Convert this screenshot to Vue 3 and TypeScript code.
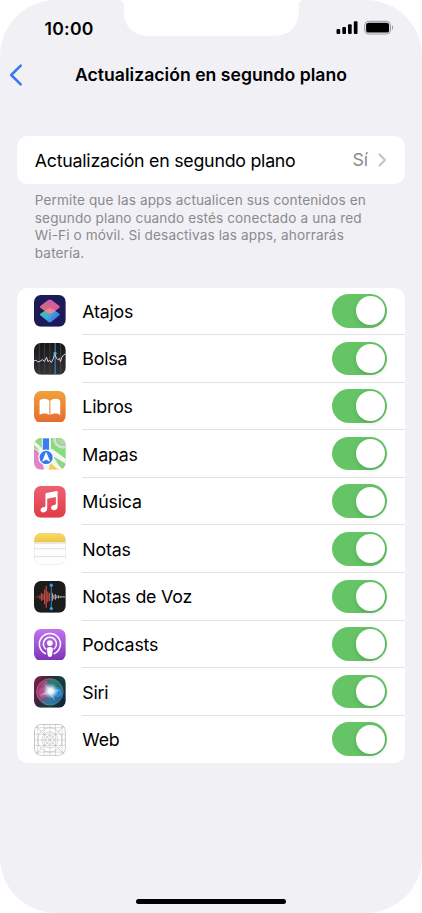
<script setup lang="ts">
import { ref } from 'vue'

interface AppRow {
  id: string
  name: string
  enabled: boolean
}

const apps = ref<AppRow[]>([
  { id: 'shortcuts', name: 'Atajos', enabled: true },
  { id: 'stocks', name: 'Bolsa', enabled: true },
  { id: 'books', name: 'Libros', enabled: true },
  { id: 'maps', name: 'Mapas', enabled: true },
  { id: 'music', name: 'Música', enabled: true },
  { id: 'notes', name: 'Notas', enabled: true },
  { id: 'voice', name: 'Notas de Voz', enabled: true },
  { id: 'podcasts', name: 'Podcasts', enabled: true },
  { id: 'siri', name: 'Siri', enabled: true },
  { id: 'web', name: 'Web', enabled: true },
])
</script>

<template>
  <div class="phone">
    <svg class="notch" width="188" height="36" viewBox="0 0 188 36">
      <path d="M0 0H188C184.500 0 181.700 1.500 181.700 6V11C181.700 26 172 35.800 157 35.800H31C16 35.800 6.800 26 6.800 11V6C6.800 1.500 4 0 0 0Z" fill="#fff" />
    </svg>

    <header class="status">
      <span class="time">10:00</span>
      <svg class="signals" width="60" height="16" viewBox="0 0 60 16">
        <rect x="0.500" y="9" width="3.700" height="5" rx="1" />
        <rect x="6.300" y="7" width="3.700" height="7" rx="1" />
        <rect x="12" y="4.200" width="3.700" height="9.800" rx="1" />
        <rect x="17.800" y="1.200" width="3.700" height="12.800" rx="1" />
        <rect x="28.700" y="1.300" width="25.800" height="12.700" rx="4" fill="none" stroke="#99989d" />
        <rect x="30.100" y="2.700" width="23" height="9.900" rx="2.600" />
        <path d="M56 5.500C57.500 6 57.500 9.300 56 9.800Z" fill="#99989d" />
      </svg>
    </header>

    <nav class="nav">
      <svg class="back" width="14" height="22" viewBox="0 0 14 22">
        <path d="M11.700 1.700 2.200 11l9.500 9.300" fill="none" stroke="#3478f6" stroke-width="2.500" stroke-linecap="round" stroke-linejoin="round" />
      </svg>
      <h1>Actualización en segundo plano</h1>
    </nav>

    <main>
      <section class="card general">
        <span class="general-label">Actualización en segundo plano</span>
        <span class="value">Sí</span>
        <svg width="9" height="14" viewBox="0 0 9 14">
          <path d="M1.500 1.400 7 7l-5.500 5.600" fill="none" stroke="#c1c1c4" stroke-width="2" stroke-linecap="round" stroke-linejoin="round" />
        </svg>
      </section>

      <p class="hint">
        Permite que las apps actualicen sus contenidos en<br />
        segundo plano cuando estés conectado a una red<br />
        Wi-Fi o móvil. Si desactivas las apps, ahorrarás<br />
        batería.
      </p>

      <ul class="card list">
        <li v-for="app in apps" :key="app.id" class="row">
          <svg class="icon" viewBox="0 0 32 32">
            <defs>
              <clipPath :id="`clip-${app.id}`"><rect width="32" height="32" rx="7" /></clipPath>
            </defs>
            <g :clip-path="`url(#clip-${app.id})`">
              <template v-if="app.id === 'shortcuts'">
                <defs>
                  <linearGradient id="sc-bottom" x1="0" y1="0" x2="1" y2="0.600">
                    <stop offset="0" stop-color="#4fc08c" />
                    <stop offset="0.500" stop-color="#42b2d8" />
                    <stop offset="1" stop-color="#3a6fe8" />
                  </linearGradient>
                  <linearGradient id="sc-top" x1="0.700" y1="0" x2="0.350" y2="1">
                    <stop offset="0" stop-color="#d75dc9" />
                    <stop offset="0.500" stop-color="#e56692" />
                    <stop offset="1" stop-color="#ed7869" />
                  </linearGradient>
                </defs>
                <rect width="32" height="32" fill="#1d1b57" />
                <path d="M7 18.300 14.500 13.500q1.500-1 3 0l7.500 4.800q2 1.300 0 2.700l-7.300 5.900q-1.700 1.200-3.400 0L7 21q-2-1.400 0-2.700Z" fill="url(#sc-bottom)" />
                <path d="M7 10.600 14.300 5.100q1.700-1.200 3.400 0l7.300 5.500q2 1.400 0 2.700L17.500 18.500q-1.500 1-3 0L7 13.300q-2-1.300 0-2.700Z" fill="url(#sc-top)" opacity=".93" />
                <path d="m16 13.200 6 2.800-4.500 2.300q-1.500.7-3 0L10.500 16Z" fill="#ecaaae" opacity=".4" />
              </template>

              <template v-else-if="app.id === 'stocks'">
                <defs>
                  <linearGradient id="st-bg" x1="0" y1="0" x2="0" y2="1">
                    <stop offset="0" stop-color="#171718" />
                    <stop offset="1" stop-color="#343437" />
                  </linearGradient>
                </defs>
                <rect width="32" height="32" fill="url(#st-bg)" />
                <path d="M5.300 0V32M10.700 0V32M16 0V32M26.700 0V32" stroke="#48484b" stroke-width=".8" />
                <path d="M21.300 0V32" stroke="#3c83bd" stroke-width="1.200" />
                <path d="m0 18 2-.7 2 1.800 2.200-.8 2.300-1.500 2 1.800 2.200-4.200 1.300 4.400 1.800-1.400 1.700 2.200 2-3.900 1.300-5.200 1.700 4.700 1.600 1.700 1.500-1.500 1 3.300 1.600-4.600 1.800-2.100 2-1" fill="none" stroke="#d8d8d8" stroke-width="1" stroke-linejoin="round" />
                <circle cx="21.200" cy="10.300" r="1.600" fill="#53ade5" />
              </template>

              <template v-else-if="app.id === 'books'">
                <defs>
                  <linearGradient id="bk-bg" x1="0" y1="0" x2="0" y2="1">
                    <stop offset="0" stop-color="#f0a13b" />
                    <stop offset="1" stop-color="#e56b32" />
                  </linearGradient>
                </defs>
                <rect width="32" height="32" fill="url(#bk-bg)" />
                <path d="M15.500 24.200C12.800 22.100 8.800 22.200 5.600 24.100V10.300C5.600 7.100 13.500 6.800 15.500 9.900ZM16.500 24.200C19.200 22.100 23.200 22.200 26.400 24.100V10.300C26.400 7.100 18.500 6.800 16.500 9.900Z" fill="#fff" />
              </template>

              <template v-else-if="app.id === 'maps'">
                <rect width="32" height="32" fill="#f1f1f1" />
                <path d="M0 0H8V14L0 10Z" fill="#91d77d" />
                <path d="M17 0H32V24L17 12Z" fill="#86db7d" />
                <path d="M0 11Q7 13 10 32H0Z" fill="#de85c6" />
                <path d="M17 22 29 32H15Z" fill="#f4ce4f" />
                <path d="M19 18 32 26V32H28Z" fill="#8dd77d" />
                <path d="M0 5Q8 11 10 18M17 12 32 23M15 22 31 35" fill="none" stroke="#f7f7f6" stroke-width="3.200" />
                <circle cx="29" cy="1" r="8.300" fill="none" stroke="#d6dcd3" stroke-width="2.800" />
                <circle cx="29" cy="1" r="4.500" fill="#a6dd9f" stroke="#c1ccbf" stroke-width="1.500" />
                <path d="M8.400 0H15.600V15H8.400Z" fill="#3c7cef" stroke="#fff" stroke-width=".8" />
                <circle cx="12.200" cy="19.600" r="7.300" fill="#3578ec" stroke="#fff" stroke-width="1.300" />
                <path d="m12.200 14.700 3.500 8.600-3.500-1.900-3.500 1.900Z" fill="#fff" stroke="#fff" stroke-width=".7" stroke-linejoin="round" />
              </template>

              <template v-else-if="app.id === 'music'">
                <defs>
                  <linearGradient id="mu-bg" x1="0" y1="0" x2="0" y2="1">
                    <stop offset="0" stop-color="#ec6173" />
                    <stop offset="1" stop-color="#e13b48" />
                  </linearGradient>
                </defs>
                <rect width="32" height="32" fill="url(#mu-bg)" />
                <path d="M11.500 8.200Q11.600 7.300 12.500 7.100L22.500 5Q23.800 4.800 23.800 6V20.600C23.800 23 22 24.400 20 24.400 18.300 24.400 17.200 23.400 17.200 22 17.200 20.400 18.400 19.600 20 19.200L21.200 18.900Q22 18.700 22 17.700V11.100L13.300 12.900V22.500C13.300 25 11.600 26.600 9.400 26.600 7.700 26.600 6.600 25.600 6.600 24.200 6.600 22.600 7.800 21.800 9.400 21.400L10.500 21.100Q11.500 20.900 11.500 19.800Z" fill="#fff" />
              </template>

              <template v-else-if="app.id === 'notes'">
                <defs>
                  <linearGradient id="nt-top" x1="0" y1="0" x2="0" y2="1">
                    <stop offset="0" stop-color="#f9db67" />
                    <stop offset="1" stop-color="#efc743" />
                  </linearGradient>
                </defs>
                <rect width="32" height="32" fill="#fefefe" />
                <rect width="32" height="9" fill="url(#nt-top)" />
                <path d="M0 9.100H32" stroke="#d5b950" stroke-width=".5" />
                <path d="M1 10.400H32" stroke="#b4b4b4" stroke-width=".8" stroke-dasharray=".8 .9" />
                <path d="M0 15.800H32M0 23.700H32" stroke="#d9d9da" stroke-width=".8" />
                <rect x=".3" y=".3" width="31.400" height="31.400" rx="6.700" fill="none" stroke="#d7d7d7" stroke-width=".5" />
              </template>

              <template v-else-if="app.id === 'voice'">
                <rect width="32" height="32" fill="#1c1c1d" />
                <path d="M1.500 16H5" stroke="#b6433c" stroke-width=".8" />
                <path d="M6 14.500V17.500M7.600 12.500V19.500M9.100 13.500V18.500M10.700 9V23M12.300 5.500V26.500M13.900 11V21M15.500 12.500V19.500" stroke="#c14a43" stroke-width="1.200" stroke-linecap="round" />
                <path d="M18.500 12.500V19.500M20 14.500V17.500M21.500 13.500V18.500M23 15V17M24.600 14.800V17.200M26.200 15.500V16.500M27 16H31" stroke="#d0d0d0" stroke-width=".9" stroke-linecap="round" />
                <path d="M17.400 4V28" stroke="#377eb6" stroke-width="1.100" />
                <circle cx="17.400" cy="4.200" r="1.600" fill="#4a9cda" />
                <circle cx="17.400" cy="27.800" r="1.600" fill="#4a9cda" />
              </template>

              <template v-else-if="app.id === 'podcasts'">
                <defs>
                  <linearGradient id="pc-bg" x1="0" y1="0" x2="0" y2="1">
                    <stop offset="0" stop-color="#c374ed" />
                    <stop offset="1" stop-color="#7c32b9" />
                  </linearGradient>
                </defs>
                <rect width="32" height="32" fill="url(#pc-bg)" />
                <path d="M11.600 24.800A10.600 10.600 0 1 1 20.400 24.800" fill="none" stroke="#fff" stroke-width="1.500" stroke-linecap="round" />
                <path d="M11.700 20A6.600 6.600 0 1 1 20.300 20" fill="none" stroke="#fff" stroke-width="1.500" stroke-linecap="round" />
                <circle cx="16" cy="14.200" r="2.900" fill="#fff" />
                <path d="M13 20.300Q13 18.200 16 18.200T19 20.300L18.300 26Q18 28.200 16 28.200T13.700 26Z" fill="#fff" />
              </template>

              <template v-else-if="app.id === 'siri'">
                <defs>
                  <linearGradient id="si-bg" x1="0" y1="0.250" x2="1" y2="0.750">
                    <stop offset="0" stop-color="#7d1c46" />
                    <stop offset="0.350" stop-color="#35263a" />
                    <stop offset="0.650" stop-color="#12403f" />
                    <stop offset="1" stop-color="#10203f" />
                  </linearGradient>
                  <linearGradient id="si-orb" x1="0" y1="0.400" x2="1" y2="0.600">
                    <stop offset="0" stop-color="#a02c66" />
                    <stop offset="0.350" stop-color="#8e6a8c" />
                    <stop offset="0.600" stop-color="#3b9a9c" />
                    <stop offset="1" stop-color="#1a5a96" />
                  </linearGradient>
                  <radialGradient id="si-glow">
                    <stop offset="0" stop-color="#fff" />
                    <stop offset="0.350" stop-color="#eefaff" stop-opacity=".9" />
                    <stop offset="1" stop-color="#9bd3ee" stop-opacity="0" />
                  </radialGradient>
                </defs>
                <rect width="32" height="32" fill="url(#si-bg)" />
                <circle cx="16" cy="16" r="12.800" fill="url(#si-orb)" />
                <path d="M12 4Q22 1 27 10L18 14Z" fill="#1c6660" opacity=".6" />
                <path d="M7 24Q14 18 17 17L28 20Q23 30 12 28Z" fill="#2c629f" opacity=".6" />
                <circle cx="10" cy="16.500" r="5.600" fill="#cf5190" opacity=".6" />
                <circle cx="24" cy="17" r="4.300" fill="#2f95e6" opacity=".7" />
                <path d="M10 7.500 18 14.500 27 13.500 19 17.500 21 25 15 18 5 20 13.500 14.500Z" fill="#c9eeee" opacity=".45" />
                <circle cx="16.800" cy="15" r="8" fill="url(#si-glow)" />
                <circle cx="16" cy="16" r="13.300" fill="none" stroke="#76a399" stroke-width=".8" opacity=".85" />
                <path d="M5 23A13.300 13.300 0 0 1 7 6.300" fill="none" stroke="#d84583" stroke-width=".9" />
              </template>

              <template v-else>
                <rect width="32" height="32" fill="#fff" />
                <g fill="none" stroke="#b8b8b8" stroke-width=".6">
                  <rect x=".4" y=".4" width="31.200" height="31.200" rx="6.700" stroke-width=".9" />
                  <path d="M3.700 0V32M10.400 0V32M16 0V32M21.600 0V32M28.300 0V32M0 3.700H32M0 10.400H32M0 16H32M0 21.600H32M0 28.300H32" opacity=".8" />
                  <path d="M1.500 1.500 30.500 30.500M30.500 1.500 1.500 30.500" />
                  <circle cx="16" cy="16" r="12.300" />
                  <circle cx="16" cy="16" r="8" />
                  <circle cx="16" cy="16" r="4.300" />
                </g>
              </template>
            </g>
          </svg>
          <div class="row-body">
            <span class="name">{{ app.name }}</span>
            <button
              type="button"
              class="toggle"
              :class="{ on: app.enabled }"
              role="switch"
              :aria-checked="app.enabled"
              :aria-label="app.name"
              @click="app.enabled = !app.enabled"
            >
              <span class="knob"></span>
            </button>
          </div>
        </li>
      </ul>
    </main>

    <div class="home-bar"></div>
  </div>
</template>

<style>
body {
  background: #fff;
}
</style>

<style scoped>
.phone {
  position: relative;
  box-sizing: border-box;
  display: flex;
  flex-direction: column;
  width: 422px;
  height: 913px;
  overflow: hidden;
  border-radius: 56px;
  background: #f1f0f5;
  color: #000;
  font-family: Inter, 'Liberation Sans', sans-serif;
}

.notch {
  position: absolute;
  top: 0;
  left: 117px;
}

.status {
  display: flex;
  align-items: center;
  justify-content: space-between;
  box-sizing: border-box;
  height: 56px;
  padding: 0 26px 0 44.500px;
}

.time {
  font-size: 17.600px;
  font-weight: 600;
  letter-spacing: 0.250px;
}

.nav {
  display: grid;
  grid-template-columns: 14px 1fr 14px;
  align-items: center;
  height: 38px;
  padding: 0 9px;
}

h1 {
  margin: 0;
  padding-bottom: 2px;
  text-align: center;
  font-size: 17.600px;
  font-weight: 600;
  letter-spacing: 0.020px;
  white-space: nowrap;
}

main {
  padding: 42.300px 17.300px 0;
}

.card {
  border-radius: 10.500px;
  background: #fff;
}

.general {
  display: flex;
  align-items: center;
  box-sizing: border-box;
  height: 47.600px;
  padding: 0 17.500px;
  font-size: 17.800px;
  letter-spacing: -0.250px;
}

.general-label {
  flex: 1;
  white-space: nowrap;
}

.value {
  margin-right: 10.500px;
  padding-bottom: 2px;
  color: #8a8a8e;
}

.hint {
  margin: 8.400px 0 0;
  padding: 0 17.500px;
  color: #8a8a8f;
  font-size: 13.600px;
  line-height: 17.400px;
  letter-spacing: 0.120px;
  white-space: nowrap;
}

.list {
  margin: 25.600px 0 0;
  padding: 0;
  list-style: none;
}

.row {
  display: flex;
  align-items: center;
  height: 47.600px;
  padding-left: 17.200px;
}

.icon {
  flex: none;
  width: 31.800px;
  height: 31.800px;
  margin-right: 16px;
}

.row-body {
  display: flex;
  flex: 1;
  align-items: center;
  justify-content: space-between;
  box-sizing: border-box;
  height: 100%;
  padding-right: 17.300px;
  border-bottom: 1px solid #e2e2e4;
}

.row:last-child .row-body {
  border-bottom-color: transparent;
}

.name {
  padding-top: 1px;
  font-size: 17.800px;
  letter-spacing: -0.200px;
}

.toggle {
  display: flex;
  align-items: center;
  box-sizing: border-box;
  width: 55.400px;
  height: 33.600px;
  padding: 0 2.300px;
  border: 0;
  border-radius: 17px;
  background: #e9e9eb;
}

.toggle.on {
  justify-content: flex-end;
  background: #65c466;
}

.knob {
  width: 29.200px;
  height: 29.200px;
  border-radius: 50%;
  background: #fff;
  box-shadow: 0 2px 5px rgb(0 0 0 / 14%);
}

.home-bar {
  width: 150.500px;
  height: 5.400px;
  margin: auto auto 9px;
  border-radius: 3px;
  background: #000;
}
</style>
